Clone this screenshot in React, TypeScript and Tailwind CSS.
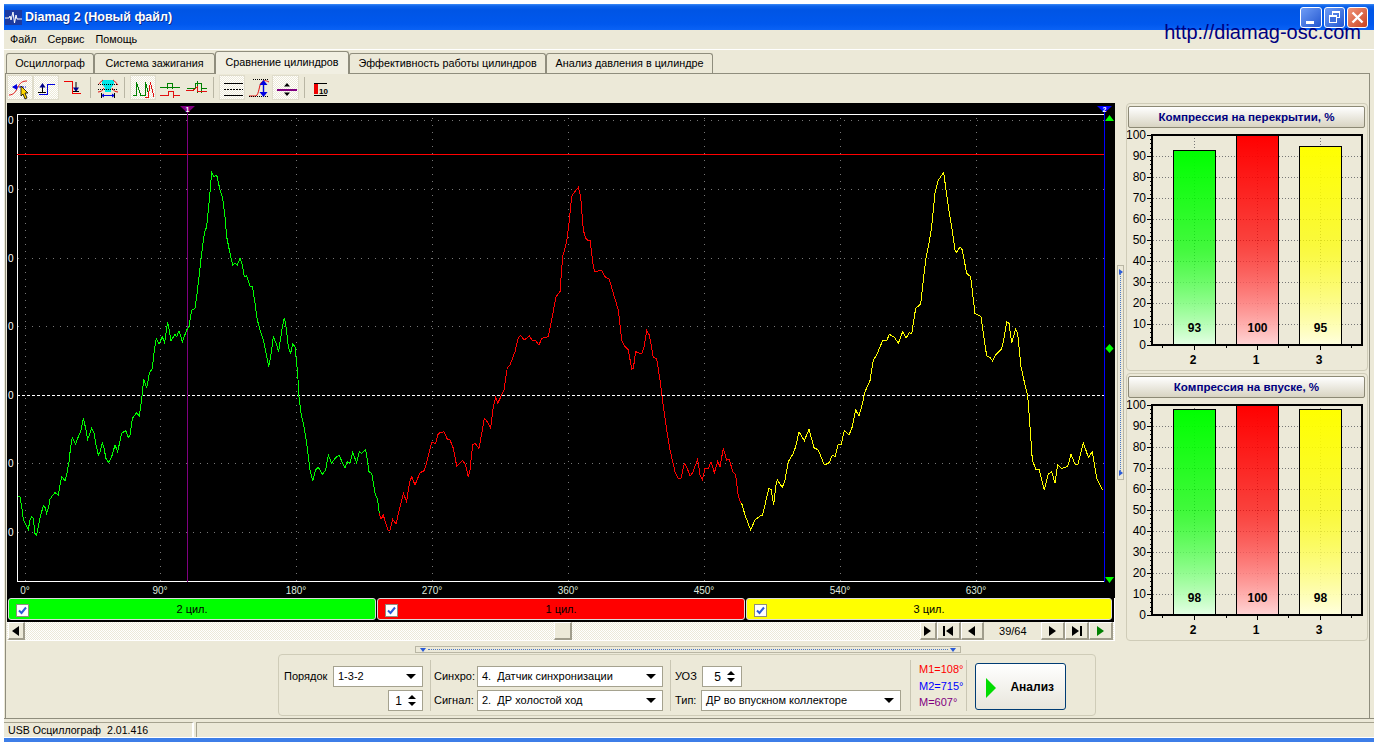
import React from 'react';

// points are traced off the scope, as [x, y] of the 3x crops; offset turns them into page pixels
const toPoints = (x0: number, pts: number[][]) =>
  pts.map(([x, y]) => `${x0 + x / 3},${150 + y / 3}`).join(' ');

const greenTrace = [[55,1040],[60,1040],[65,1070],[70,1108],[78,1125],[85,1138],[90,1110],[95,1100],[100,1105],[105,1150],[110,1155],[115,1130],[122,1095],[130,1068],[135,1072],[140,1090],[145,1075],[150,1048],[155,1040],[165,1028],[175,1035],[180,1005],[185,980],[195,992],[200,975],[207,935],[212,890],[217,862],[227,882],[235,860],[242,845],[250,805],[257,835],[263,868],[275,835],[282,850],[288,885],[295,915],[300,905],[307,880],[312,895],[318,925],[325,938],[335,920],[345,885],[353,905],[365,850],[377,842],[385,862],[390,855],[397,805],[410,788],[418,798],[425,750],[431,688],[440,715],[448,670],[457,655],[463,600],[469,565],[477,582],[487,560],[494,578],[503,515],[513,572],[525,553],[530,560],[537,542],[547,575],[560,540],[567,530],[575,480],[585,475],[590,440],[597,380],[605,310],[613,250],[620,230],[627,160],[635,68],[642,80],[650,75],[660,120],[668,145],[675,200],[680,260],[690,310],[698,345],[705,340],[712,345],[720,325],[727,345],[733,380],[740,377],[750,408],[757,408],[765,460],[772,510],[780,540],[790,570],[800,620],[806,650],[812,620],[820,560],[830,585],[836,605],[847,530],[853,503],[858,530],[865,590],[872,610],[878,582],[885,590],[893,670],[897,740],[903,790],[912,830],[920,880],[930,960],[938,993],[947,960],[955,952],[967,973],[977,960],[985,915],[995,940],[1005,925],[1017,915],[1035,955],[1042,935],[1050,940],[1058,908],[1070,938],[1078,905],[1085,910],[1097,898],[1107,965],[1115,970],[1125,1030],[1133,1050],[1138,1090]];

const redTrace = [[28,1090],[33,1108],[40,1095],[47,1120],[55,1142],[60,1140],[68,1108],[78,1122],[90,1070],[100,1030],[110,1055],[118,1000],[125,980],[135,1005],[150,968],[163,962],[172,930],[185,878],[197,880],[205,850],[222,845],[232,868],[240,870],[250,895],[260,948],[278,932],[287,945],[295,982],[300,960],[308,885],[315,880],[327,895],[337,840],[343,805],[352,815],[362,835],[370,770],[377,742],[383,760],[395,735],[402,720],[412,652],[420,645],[435,605],[445,562],[452,557],[463,570],[478,558],[487,572],[495,570],[507,585],[515,565],[535,560],[545,510],[558,440],[570,425],[578,320],[590,275],[597,220],[605,140],[612,128],[625,112],[632,140],[640,240],[647,265],[655,272],[660,270],[670,350],[675,365],[695,360],[705,380],[718,388],[730,430],[745,480],[755,570],[765,590],[775,600],[785,657],[790,655],[797,605],[815,612],[822,590],[830,542],[838,555],[850,622],[860,627],[870,690],[880,770],[890,840],[900,900],[915,965],[925,985],[933,985],[943,940],[950,950],[960,978],[968,968],[983,928],[990,975],[997,990],[1005,955],[1015,955],[1023,935],[1033,968],[1043,935],[1050,950],[1060,895],[1070,930],[1078,928],[1088,965],[1097,975],[1105,1040],[1113,1060]];

const yellowTrace = [[20,1060],[30,1095],[47,1140],[60,1110],[75,1098],[83,1095],[92,1055],[102,1015],[108,1018],[116,1065],[122,1010],[127,990],[142,1012],[150,990],[160,935],[175,910],[182,890],[192,845],[208,872],[222,838],[237,893],[250,900],[268,945],[283,938],[292,915],[300,920],[310,882],[318,885],[328,842],[342,855],[352,830],[362,780],[372,798],[380,770],[390,725],[405,692],[415,630],[425,615],[443,572],[455,572],[463,553],[478,562],[490,580],[503,545],[513,565],[523,548],[530,552],[542,475],[557,462],[565,390],[572,330],[580,290],[590,230],[600,130],[610,90],[626,68],[640,170],[650,230],[660,300],[665,308],[675,290],[682,300],[695,370],[707,380],[720,490],[738,500],[745,550],[755,618],[765,622],[773,633],[782,615],[800,597],[808,560],[815,515],[822,520],[830,578],[842,537],[848,550],[858,650],[870,705],[878,735],[885,830],[892,930],[903,960],[912,958],[928,1020],[940,972],[950,965],[960,1000],[968,945],[980,955],[998,950],[1008,913],[1020,943],[1028,945],[1045,878],[1060,922],[1072,905],[1085,985],[1103,1020]];

const gridX = [25, 160, 296, 432, 568, 704, 840, 976];
const gridY = [189, 258, 326, 463, 532];
const degrees = ['0°', '90°', '180°', '270°', '360°', '450°', '540°', '630°'];

const tabs = [
  { label: 'Осциллограф', w: 'w-[88px]' },
  { label: 'Система зажигания', w: 'w-[121px]' },
  { label: 'Сравнение цилиндров', w: 'w-[134px]', active: true },
  { label: 'Эффективность работы цилиндров', w: 'w-[197px]' },
  { label: 'Анализ давления в цилиндре', w: 'w-[167px]' },
];

const channels = [
  { label: '2 цил.', cls: 'bg-[#00ff00] w-[368px]' },
  { label: '1 цил.', cls: 'bg-[#ff0000] w-[368px]' },
  { label: '3 цил.', cls: 'bg-[#ffff00] w-[366px]' },
];

const ToolBtn = ({ w, pressed, children }: { w: string; pressed?: boolean; children: React.ReactNode }) => (
  <div
    className={`${w} h-[25px] shrink-0 ${
      pressed
        ? 'border border-[#dfdccb] bg-[repeating-conic-gradient(#ece9d8_0%_25%,#ffffff_0%_50%)] bg-[length:2px_2px]'
        : ''
    }`}
  >
    {children}
  </div>
);

const ToolIcon = ({ w, children }: { w: number; children: React.ReactNode }) => (
  <svg width={w} height={25} viewBox={`0 0 ${w} 25`} className="block -m-px" fill="none">
    {children}
  </svg>
);

const ToolSep = ({ m }: { m: string }) => <div className={`w-[2px] h-[21px] self-center border-l border-[#b9b6a4] border-r-white ${m}`} />;

const Toolbar = () => (
  <div className="flex items-center h-[25px] pl-[1px] mt-[1px]">
    <ToolBtn w="w-[26px]" pressed>
      <ToolIcon w={26}>
        <path d="M2 20 C7 20 9 16 11 12 C13 8 15 6 20 6" stroke="#e01010" />
        <path d="M6 12 H19" stroke="#0000e0" strokeDasharray="2 1" />
        <path d="M5 12 L10 9 V15 Z" fill="#0000e0" />
        <path d="M14 11 V21 L16 19 L18 24 L20 23 L18 18 L21 18 Z" fill="#ffd800" stroke="#000" strokeWidth="0.8" />
      </ToolIcon>
    </ToolBtn>
    <ToolBtn w="w-[26px]" pressed>
      <ToolIcon w={26}>
        <path d="M6 19.5 H14.5 V9.5 H22" stroke="#0000e0" shapeRendering="crispEdges" />
        <path d="M9.5 11 V18" stroke="#000" />
        <path d="M6.5 12.5 L9.5 8 L12.5 12.5 Z" fill="#00008b" />
        <path d="M5 17.5 H13" stroke="#000" shapeRendering="crispEdges" />
      </ToolIcon>
    </ToolBtn>
    <ToolBtn w="w-[26px]">
      <svg width={26} height={25} viewBox="0 0 26 25" className="block" fill="none">
        <path d="M5 6.5 H13.5 V18.5 H22" stroke="#f00000" shapeRendering="crispEdges" />
        <path d="M17 7 V14" stroke="#000" />
        <path d="M14 12.5 L17 17 L20 12.5 Z" fill="#00008b" />
        <path d="M14 16.5 H20" stroke="#000" shapeRendering="crispEdges" />
      </svg>
    </ToolBtn>
    <ToolSep m="ml-[5px] mr-[5px]" />
    <ToolBtn w="w-[22px]">
      <svg width={22} height={25} viewBox="0 0 22 25" className="block" fill="none">
        <path d="M5 5 H17 V9 L14 13 V17 H8 V13 L5 9 Z" fill="#00e8e8" />
        <path d="M1 10 C3 8 4 6 6 5 M21 10 C19 8 18 6 16 5" stroke="#e01010" />
        <path d="M1 17 C4 17 6 15 7 13 M21 17 C18 17 16 15 15 13" stroke="#e01010" />
        <path d="M1 9.5 H21" stroke="#000" strokeDasharray="1 1" />
        <path d="M1 14.5 H21" stroke="#000" strokeDasharray="1 1" />
        <path d="M5 20.5 H17" stroke="#0000e0" />
        <path d="M4 20.5 L7 18.5 V22.5 Z M18 20.5 L15 18.5 V22.5 Z" fill="#0000e0" />
        <path d="M4.5 18 V23 M17.5 18 V23" stroke="#000" />
      </svg>
    </ToolBtn>
    <ToolSep m="ml-[5px] mr-[4px]" />
    <ToolBtn w="w-[26px]" pressed>
      <ToolIcon w={26}>
        <g shapeRendering="crispEdges">
          <path d="M3 20.5 H6.5 V7.5 L11 20.5 H15.5 V7.5 L19 20" stroke="#008000" />
          <path d="M15 22.5 H18 L20.5 7.5 L24 22" stroke="#e01010" />
        </g>
      </ToolIcon>
    </ToolBtn>
    <ToolBtn w="w-[26px]">
      <svg width={26} height={25} viewBox="0 0 26 25" className="block" fill="none" shapeRendering="crispEdges">
        <path d="M4 12.5 H24 M11.5 8 V14 M16.5 8 V14" stroke="#008000" />
        <path d="M11.5 8.5 H16.5" stroke="#008000" />
        <path d="M4 20.5 H12.5 V16.5 H17.5 V22.5 M17.5 20.5 H24" stroke="#e01010" />
      </svg>
    </ToolBtn>
    <ToolBtn w="w-[26px]">
      <svg width={26} height={25} viewBox="0 0 26 25" className="block" fill="none" shapeRendering="crispEdges">
        <path d="M5 13.5 H13.5 V8.5 H19.5 V18 M15.5 6 V18 M19.5 13.5 H25" stroke="#008000" />
        <path d="M4 15.5 H11 L15 12 V16.5 H25" stroke="#e01010" />
      </svg>
    </ToolBtn>
    <ToolSep m="ml-[5px] mr-[4px]" />
    <ToolBtn w="w-[26px]" pressed>
      <ToolIcon w={26}>
        <g shapeRendering="crispEdges">
          <path d="M5 8.5 H24 M5 20.5 H24" stroke="#000" />
          <path d="M5 14.5 H24" stroke="#000" strokeDasharray="2 1" />
        </g>
      </ToolIcon>
    </ToolBtn>
    <ToolBtn w="w-[27px]">
      <svg width={27} height={25} viewBox="0 0 27 25" className="block" fill="none">
        <path d="M4 21 H11 C14 19 14 11 16 8 C18 5 20 5 24 7" stroke="#e01010" />
        <path d="M8 4 H24 M4 21.5 H24" stroke="#000" strokeDasharray="1 1" shapeRendering="crispEdges" />
        <path d="M18.5 7 V19" stroke="#0000e0" strokeWidth="1.4" />
        <path d="M14.5 10 L18.5 5 L22.5 10 Z M14.5 17 L18.5 22 L22.5 17 Z" fill="#0000e0" />
      </svg>
    </ToolBtn>
    <ToolBtn w="w-[27px]" pressed>
      <ToolIcon w={27}>
        <path d="M5 14.5 H25" stroke="#800080" strokeWidth="2" shapeRendering="crispEdges" />
        <path d="M12 11.5 L15 8 L18 11.5 Z M12 17.5 L15 21 L18 17.5 Z" fill="#000" />
      </ToolIcon>
    </ToolBtn>
    <ToolSep m="ml-[5px] mr-[3px]" />
    <ToolBtn w="w-[22px]">
      <svg width={22} height={25} viewBox="0 0 22 25" className="block" fill="none">
        <rect x="5" y="8" width="4" height="11" fill="#ee0000" />
        <path d="M5 8.5 H18 M5 20.5 H18" stroke="#000" shapeRendering="crispEdges" />
        <text x="10" y="18.5" fontSize="8" fontWeight="700" fill="#000">10</text>
      </svg>
    </ToolBtn>
  </div>
);

const Scope = () => (
  <svg width={1108} height={495} viewBox="7 103 1108 495" className="block bg-black">
    <g shapeRendering="crispEdges">
      {gridX.map((x) => (
        <line key={x} x1={x + 0.5} y1={118} x2={x + 0.5} y2={586} stroke="#777" strokeDasharray="1 6" />
      ))}
      {[120, ...gridY].map((y) => (
        <line key={y} x1={18} y1={y + 0.5} x2={1104} y2={y + 0.5} stroke="#777" strokeDasharray="1 6" />
      ))}
      <line x1={17} y1={395.5} x2={1104} y2={395.5} stroke="#fff" strokeDasharray="3 2" />
      <path d="M17.5 114 V582 M17 114.5 H1104 M17 581.5 H1104" stroke="#fff" fill="none" />
      <line x1={17} y1={154.5} x2={1104} y2={154.5} stroke="#ff0000" />
      <line x1={187.5} y1={110} x2={187.5} y2={582} stroke="#800080" />
      <line x1={1104.5} y1={110} x2={1104.5} y2={582} stroke="#0000ff" />
    </g>
    <polyline points={toPoints(0, greenTrace)} fill="none" stroke="#00ff00" shapeRendering="crispEdges" />
    <polyline points={toPoints(370, redTrace)} fill="none" stroke="#ff0000" shapeRendering="crispEdges" />
    <polyline points={toPoints(735, yellowTrace)} fill="none" stroke="#ffff00" shapeRendering="crispEdges" />
    {[120, 189, 258, 326, 395, 463, 532].map((y) => (
      <text key={y} x={8} y={y + 4} fontSize={10} fill="#fff">0</text>
    ))}
    {degrees.map((d, i) => (
      <text key={d} x={gridX[i]} y={594} fontSize={10} fill="#dfe8df" textAnchor="middle">{d}</text>
    ))}
    <path d="M180 106 H195 L187.5 113 Z" fill="#800080" />
    <text x={187.5} y={111.5} fontSize={7} fontWeight={700} fill="#fff" textAnchor="middle">1</text>
    <path d="M1097 106 H1112 L1104.5 113 Z" fill="#0000ff" />
    <text x={1104.5} y={111.5} fontSize={7} fontWeight={700} fill="#fff" textAnchor="middle">2</text>
    <path d="M1105 121 L1109.5 115 L1114 121 Z" fill="#00ff00" />
    <path d="M1105 577 L1109.5 583 L1114 577 Z" fill="#00ff00" />
    <path d="M1105.5 348.5 L1109.5 344 L1113.5 348.5 L1109.5 353 Z" fill="#00ff00" />
  </svg>
);

const Checkbox = () => (
  <div className="flex items-center justify-center w-[13px] h-[13px] bg-white border border-[#8f8f7f]">
    <svg width="9" height="9" viewBox="0 0 9 9" fill="none">
      <path d="M1 4.5 L3.5 7 L8 1.5" stroke="#2a5bd7" strokeWidth="2" />
    </svg>
  </div>
);

const Tri = ({ dir, cls = 'border-b-black' }: { dir: 'left' | 'right' | 'up' | 'down'; cls?: string }) => {
  if (dir === 'left') return <div className="w-0 h-0 border-y-[5px] border-y-transparent border-r-[7px] border-r-black" />;
  if (dir === 'right') return <div className={`w-0 h-0 border-y-[5px] border-y-transparent border-l-[7px] ${cls}`} />;
  if (dir === 'up') return <div className="w-0 h-0 border-x-[4px] border-x-transparent border-b-[4px] border-b-black" />;
  return <div className="w-0 h-0 border-x-[5px] border-x-transparent border-t-[5px] border-t-black" />;
};

const NavBtn = ({ w, children }: { w: string; children?: React.ReactNode }) => (
  <div className={`${w} h-[18px] flex items-center justify-center gap-px bg-[#ece9d8] border-t border-l border-t-white border-l-white border-r-2 border-b-2 border-r-[#a09d8c] border-b-[#a09d8c]`}>
    {children}
  </div>
);

const ScrollRow = () => (
  <div className="flex h-[18px] pl-[1px] pr-[1px] bg-[repeating-conic-gradient(#ece9d8_0%_25%,#ffffff_0%_50%)] bg-[length:2px_2px]">
    <NavBtn w="w-[17px]"><Tri dir="left" /></NavBtn>
    <div className="w-[531px]" />
    <NavBtn w="w-[18px]" />
    <div className="w-[349px]" />
    <NavBtn w="w-[17px]"><Tri dir="right" cls="border-l-black" /></NavBtn>
    <NavBtn w="w-[24px]"><div className="w-[2px] h-[10px] bg-black" /><Tri dir="left" /></NavBtn>
    <NavBtn w="w-[24px]"><Tri dir="left" /></NavBtn>
    <div className="w-[57px] h-[18px] bg-[#ece9d8] text-[11px] leading-[18px] text-center">39/64</div>
    <NavBtn w="w-[24px]"><Tri dir="right" cls="border-l-black" /></NavBtn>
    <NavBtn w="w-[24px]"><Tri dir="right" cls="border-l-black" /><div className="w-[2px] h-[10px] bg-black" /></NavBtn>
    <NavBtn w="w-[24px]"><Tri dir="right" cls="border-l-[#008000]" /></NavBtn>
  </div>
);

const Bars = ({ id, top, values }: { id: string; top: number; values: number[] }) => {
  const y0 = top - 7;
  const h = 210;
  const xs = [1173, 1236, 1299];
  const colors = [
    ['#00ff00', '#e6ffe6'],
    ['#ff0000', '#ffd6d6'],
    ['#ffff00', '#ffffe0'],
  ];
  const names = ['2', '1', '3'];
  const yOf = (v: number) => top + h * (1 - v / 100);
  return (
    <svg width={239} height={242} viewBox={`1127 ${y0} 239 242`} className="block">
      <defs>
        {colors.map(([a, b], i) => (
          <linearGradient key={i} id={`${id}-${i}`} x1="0" y1="0" x2="0" y2="1">
            <stop offset="0" stopColor={a} />
            <stop offset="0.5" stopColor={a} stopOpacity="0.72" />
            <stop offset="1" stopColor={b} />
          </linearGradient>
        ))}
      </defs>
      <g shapeRendering="crispEdges">
        {[10, 20, 30, 40, 50, 60, 70, 80, 90].map((v) => (
          <line key={v} x1={1153} y1={Math.round(yOf(v)) + 0.5} x2={1362} y2={Math.round(yOf(v)) + 0.5} stroke="#777" strokeDasharray="1 2" />
        ))}
        {xs.map((x) => (
          <line key={x} x1={x + 21.5} y1={top} x2={x + 21.5} y2={top + h} stroke="#777" strokeDasharray="1 2" />
        ))}
        {Array.from({ length: 51 }, (_, i) => i * 2).map((v) => (
          <line key={v} x1={v % 10 === 0 ? 1147 : 1150} y1={Math.round(yOf(v)) + 0.5} x2={1152} y2={Math.round(yOf(v)) + 0.5} stroke="#000" />
        ))}
        {[1162, 1194, 1226, 1257, 1288, 1320, 1351].map((x, i) => (
          <line key={x} x1={x + 0.5} y1={top + h} x2={x + 0.5} y2={top + h + (i % 2 === 1 ? 5 : 3)} stroke="#000" />
        ))}
        {values.map((v, i) => (
          <rect key={i} x={xs[i] + 0.5} y={Math.round(yOf(v)) + 0.5} width={42} height={top + h - Math.round(yOf(v))} fill={`url(#${id}-${i})`} stroke="#000" />
        ))}
        <rect x={1152} y={top} width={210} height={h} fill="none" stroke="#000" strokeWidth={2} />
      </g>
      {[0, 10, 20, 30, 40, 50, 60, 70, 80, 90, 100].map((v) => (
        <text key={v} x={1146} y={yOf(v) + 4} fontSize={12} textAnchor="end" fill="#000">{v}</text>
      ))}
      {values.map((v, i) => (
        <text key={i} x={xs[i] + 21.5} y={top + h - 13} fontSize={12} fontWeight={700} textAnchor="middle" fill="#000">{v}</text>
      ))}
      {names.map((n, i) => (
        <text key={n} x={xs[i] + 20} y={top + h + 19} fontSize={12} fontWeight={700} textAnchor="middle" fill="#000">{n}</text>
      ))}
    </svg>
  );
};

const BarPanel = ({ title, id, top, values, h }: { title: string; id: string; top: number; values: number[]; h: string }) => (
  <div className={`${h} w-[242px] flex flex-col border border-[#cfccb8] rounded-[4px] pt-[2px]`}>
    <div className="mx-[1px] h-[22px] w-[237px] shrink-0 flex items-center justify-center rounded-[2px] border border-[#8c8975] bg-gradient-to-b from-white to-[#d8d4c2] text-[11.6px] font-bold text-[#000080]">
      {title}
    </div>
    <Bars id={id} top={top} values={values} />
  </div>
);

const Combo = ({ w, children }: { w: string; children: React.ReactNode }) => (
  <div className={`${w} h-[21px] flex items-center justify-between pl-[4px] pr-[6px] bg-white border border-[#a5a28f] text-[11px]`}>
    <span className="whitespace-pre">{children}</span>
    <Tri dir="down" />
  </div>
);

const Spin = ({ w, value }: { w: string; value: string }) => (
  <div className={`${w} h-[21px] flex items-center justify-end gap-[6px] pr-[6px] bg-white border border-[#a5a28f] text-[12px]`}>
    <span>{value}</span>
    <div className="flex flex-col gap-[3px]">
      <Tri dir="up" />
      <div className="w-0 h-0 border-x-[4px] border-x-transparent border-t-[4px] border-t-black" />
    </div>
  </div>
);

const VLine = () => <div className="w-px h-[51px] self-center bg-[#c9c6b3]" />;

const ControlGroup = () => (
  <div className="self-start ml-[272px] mt-px w-[818px] h-[62px] flex items-start border border-[#cfccb8] rounded-[4px] text-[11px] text-black">
    <div className="w-[151px] pl-[5px] pt-[11px] flex flex-col gap-[3px] items-end pr-[7px]">
      <div className="flex items-center w-full justify-between">
        <span>Порядок</span>
        <Combo w="w-[90px]">1-3-2</Combo>
      </div>
      <Spin w="w-[35px]" value="1" />
    </div>
    <div className="mt-[5px]"><VLine /></div>
    <div className="w-[239px] pl-[3px] pt-[11px] flex flex-col gap-[3px] pr-[7px]">
      <div className="flex items-center justify-between">
        <span>Синхро:</span>
        <Combo w="w-[186px]">{'4.  Датчик синхронизации'}</Combo>
      </div>
      <div className="flex items-center justify-between">
        <span>Сигнал:</span>
        <Combo w="w-[186px]">{'2.  ДР холостой ход'}</Combo>
      </div>
    </div>
    <div className="mt-[5px]"><VLine /></div>
    <div className="w-[239px] pl-[4px] pt-[11px] flex flex-col gap-[3px] pr-[9px]">
      <div className="flex items-center gap-[5px]">
        <span>УОЗ</span>
        <Spin w="w-[40px]" value="5" />
      </div>
      <div className="flex items-center justify-between">
        <span>Тип:</span>
        <Combo w="w-[200px]">ДР во впускном коллекторе</Combo>
      </div>
    </div>
    <div className="mt-[5px]"><VLine /></div>
    <div className="w-[55px] pl-[8px] pt-[6px] flex flex-col text-[11px] leading-[16.5px]">
      <span className="text-[#ff0000]">M1=108°</span>
      <span className="text-[#0000ff]">M2=715°</span>
      <span className="text-[#800080]">M=607°</span>
    </div>
    <div className="mt-[5px]"><VLine /></div>
    <div className="ml-[8px] mt-[8px] w-[91px] h-[47px] relative flex items-center justify-end pr-[11px] rounded-[3px] border border-[#003c74] bg-gradient-to-b from-white to-[#e8e6dc] text-[12px] font-bold">
      <svg width="10" height="20" viewBox="0 0 10 20" className="absolute left-[10px] top-[14px]">
        <path d="M0 0 L10 10 L0 20 Z" fill="#00dd00" />
      </svg>
      Анализ
    </div>
  </div>
);

const App: React.FC = () => {
  return (
    <div className="relative w-[1374px] h-[742px] overflow-hidden bg-white pl-1 pt-1 text-black [font-family:'Liberation_Sans',Arial,sans-serif]">
      <div className="flex flex-col h-[738px] bg-[#ece9d8]">
        {/* title bar */}
        <div className="h-[26px] shrink-0 flex items-center pl-[1px] pr-[6px] [background-image:linear-gradient(#3d8bf5_0,#0e63ea_2px,#0055e5_6px,#0058ee_20px,#0a62f5_100%)]">
          <svg width="17" height="15" viewBox="0 0 17 15" className="shrink-0">
            <rect width="17" height="15" fill="#1c3aa0" />
            <path d="M0 8 H4 L5 6 L6 10 L8 2 L9.5 13 L11 5 L12 9 H17" stroke="#fff" fill="none" />
          </svg>
          <span className="ml-[3px] pt-px text-[12.5px] font-bold text-white [text-shadow:1px_1px_#0a2d8c]">Diamag 2 (Новый файл)</span>
          <div className="ml-auto flex items-center gap-[2px]">
            <div className="relative w-[22px] h-[21px] rounded-[3px] border border-white bg-gradient-to-br from-[#6f9cf5] to-[#2456d0]">
              <div className="absolute left-[5px] bottom-[3px] w-[8px] h-[3px] bg-white" />
            </div>
            <div className="relative w-[21px] h-[21px] rounded-[3px] border border-white bg-gradient-to-br from-[#6f9cf5] to-[#2456d0]">
              <div className="absolute left-[7px] top-[3px] w-[8px] h-[7px] border border-white border-t-2" />
              <div className="absolute left-[4px] top-[7px] w-[8px] h-[8px] border border-white border-t-2 bg-[#3f6fdc]" />
            </div>
            <div className="w-[21px] h-[21px] flex items-center justify-center rounded-[3px] border border-white bg-gradient-to-br from-[#f0957a] to-[#c8401a]">
              <svg width="13" height="13" viewBox="0 0 13 13">
                <path d="M1.5 1.5 L11.5 11.5 M11.5 1.5 L1.5 11.5" stroke="#fff" strokeWidth="2.4" />
              </svg>
            </div>
          </div>
        </div>

        {/* menu */}
        <div className="h-[20px] shrink-0 flex items-center gap-[11px] pl-[6px] border-b border-white text-[10.8px]">
          <span>Файл</span>
          <span>Сервис</span>
          <span>Помощь</span>
        </div>

        {/* tabs */}
        <div className="h-[23px] shrink-0 flex items-end pl-[2px] text-[10.8px]">
          {tabs.map((t) => (
            <div
              key={t.label}
              className={`${t.w} flex items-center justify-center rounded-t-[3px] border border-b-0 border-[#8f8d7d] ${
                t.active ? 'h-[23px] relative z-10 -mb-px pb-[2px] bg-[#f1efe2] border-t-[#8f8d7d]' : 'h-[20px] bg-[#ece9d8]'
              }`}
            >
              {t.label}
            </div>
          ))}
        </div>

        {/* page */}
        <div className="h-[645px] shrink-0 flex flex-col w-[1365px] ml-px border border-b-0 border-[#8f8d7d]">
          <Toolbar />
          <div className="flex mt-[3px] pl-px">
            <div className="w-[1108px] flex flex-col border-r border-b border-white">
              <Scope />
              <div className="flex gap-px h-[24px] pl-px pt-0 bg-black">
                {channels.map((c) => (
                  <div key={c.label} className={`${c.cls} relative h-[22px] flex items-center justify-center rounded-[3px] border border-[#dcdcdc] text-[11px]`}>
                    <div className="absolute left-[7px] top-[5px]">
                      <Checkbox />
                    </div>
                    {c.label}
                  </div>
                ))}
              </div>
              <ScrollRow />
            </div>
            <div className="w-[11px] flex items-center justify-center">
              <div className="relative w-[7px] h-[215px] border border-[#b9b6a4] bg-[#ece9d8]">
                <div className="absolute left-[2px] top-[8px] bottom-[8px] border-l border-dotted border-[#4a78c8]" />
                <div className="absolute left-[1px] top-[3px] w-0 h-0 border-y-[3px] border-y-transparent border-l-[4px] border-l-[#2a5bd7]" />
                <div className="absolute left-[1px] bottom-[3px] w-0 h-0 border-y-[3px] border-y-transparent border-l-[4px] border-l-[#2a5bd7]" />
              </div>
            </div>
            <div className="flex flex-col gap-[2px]">
              <BarPanel title="Компрессия на перекрытии, %" id="ovl" top={135} values={[93, 100, 95]} h="h-[268px]" />
              <BarPanel title="Компрессия на впуске, %" id="intake" top={405} values={[98, 100, 98]} h="h-[268px]" />
            </div>
          </div>

          {/* horizontal splitter */}
          <div className="relative self-center mt-[5px] w-[546px] h-[7px] shrink-0 border border-[#b9b6a4]">
            <div className="absolute left-[12px] right-[12px] top-[2px] border-t border-dotted border-[#4a78c8]" />
            <div className="absolute left-[4px] top-[1px] w-0 h-0 border-x-[3px] border-x-transparent border-t-[4px] border-t-[#2a5bd7]" />
            <div className="absolute right-[4px] top-[1px] w-0 h-0 border-x-[3px] border-x-transparent border-t-[4px] border-t-[#2a5bd7]" />
          </div>
          <ControlGroup />
        </div>

        {/* status bar */}
        <div className="h-[19px] shrink-0 flex mt-0 pt-[3px] border-t border-[#8f8d7d] text-[10.6px]">
          <div className="w-[190px] h-[16px] pl-[4px] flex items-center gap-[6px] border-t border-[#a5a28f] border-r-2 border-r-white">
            <span>USB Осциллограф</span>
            <span>2.01.416</span>
          </div>
          <div className="flex-1 h-[16px] ml-[2px] border-t border-l border-[#a5a28f]" />
        </div>
        <div className="flex-1 border-t border-white bg-[#3d7ee8]" />
      </div>

      <span className="absolute right-[13px] top-[21px] text-[20px] leading-[22px] text-[#000080]">http://diamag-osc.com</span>
    </div>
  );
};

export default App;
